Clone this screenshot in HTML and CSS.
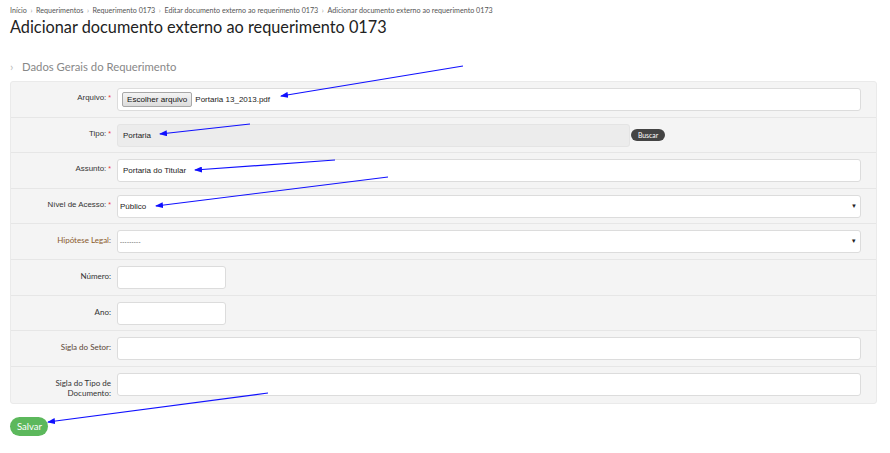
FILE: index.html
```html
<!DOCTYPE html>
<html lang="pt">
<head>
<meta charset="utf-8">
<title>Adicionar documento externo</title>
<link rel="stylesheet" href="styles.css">
</head>
<body>
<div class="page">
  <nav class="breadcrumb">
    <span>Início</span><span class="sep">›</span><span>Requerimentos</span><span class="sep">›</span><span>Requerimento 0173</span><span class="sep">›</span><span>Editar documento externo ao requerimento 0173</span><span class="sep">›</span><span>Adicionar documento externo ao requerimento 0173</span>
  </nav>
  <h1 class="title">Adicionar documento externo ao requerimento 0173</h1>

  <div class="section-head"><span class="chev">›</span>Dados Gerais do Requerimento</div>

  <div class="panel">
    <div class="row">
      <div class="label arial">Arquivo:<span class="req">*</span></div>
      <div class="field"><div class="input file"><span class="filebtn">Escolher arquivo</span><span class="fname">Portaria 13_2013.pdf</span></div></div>
    </div>
    <div class="row">
      <div class="label arial">Tipo:<span class="req">*</span></div>
      <div class="field inline"><div class="input disabled tipo">Portaria</div><span class="buscar">Buscar</span></div>
    </div>
    <div class="row">
      <div class="label arial">Assunto:<span class="req">*</span></div>
      <div class="field"><div class="input">Portaria do Titular</div></div>
    </div>
    <div class="row">
      <div class="label arial">Nível de Acesso:<span class="req">*</span></div>
      <div class="field"><div class="input select tight">Público<span class="caret">▼</span></div></div>
    </div>
    <div class="row">
      <div class="label brown">Hipótese Legal:</div>
      <div class="field"><div class="input select tight dashes">---------<span class="caret">▼</span></div></div>
    </div>
    <div class="row">
      <div class="label">Número:</div>
      <div class="field"><div class="input small"></div></div>
    </div>
    <div class="row">
      <div class="label">Ano:</div>
      <div class="field"><div class="input small"></div></div>
    </div>
    <div class="row">
      <div class="label darkbrown">Sigla do Setor:</div>
      <div class="field"><div class="input"></div></div>
    </div>
    <div class="row last">
      <div class="label">Sigla do Tipo de Documento:</div>
      <div class="field"><div class="input"></div></div>
    </div>
  </div>

  <div class="actions"><span class="salvar">Salvar</span></div>
</div>

<svg class="annot" width="890" height="453" viewBox="0 0 890 453">
  <defs>
    <marker id="ah" markerWidth="8" markerHeight="6" refX="7" refY="3" orient="auto" markerUnits="userSpaceOnUse">
      <path d="M0,0 L8,3 L0,6 z" fill="#1010ff"/>
    </marker>
  </defs>
  <g stroke="#1010ff" stroke-width="1.2" fill="none">
    <line x1="463" y1="66" x2="281" y2="96" marker-end="url(#ah)"/>
    <line x1="250" y1="124" x2="160" y2="134" marker-end="url(#ah)"/>
    <line x1="335" y1="160" x2="195" y2="170" marker-end="url(#ah)"/>
    <line x1="388" y1="177" x2="156" y2="206" marker-end="url(#ah)"/>
    <line x1="268" y1="393" x2="48" y2="422" marker-end="url(#ah)"/>
  </g>
</svg>
</body>
</html>
```

FILE: styles.css
```css
html, body {
  margin: 0;
  padding: 0;
  background: #fff;
}
body {
  font-family: Lato, "Liberation Sans", sans-serif;
  color: #333;
  width: 890px;
  height: 453px;
  overflow: hidden;
  position: relative;
}
.page {
  padding: 5px 13px 0 10px;
}
.breadcrumb {
  font-size: 7.15px;
  color: #555;
  line-height: 11px;
  height: 11px;
}
.breadcrumb .sep {
  color: #999;
  margin: 0 3.6px;
}
.title {
  margin: 0;
  font-weight: 400;
  font-size: 16.3px;
  line-height: 21px;
  color: #222;
}
.section-head {
  margin-top: 22px;
  font-size: 11.3px;
  line-height: 16px;
  color: #888;
  display: flex;
  align-items: center;
}
.section-head .chev {
  color: #bbb;
  font-size: 12px;
  width: 12px;
}
.panel {
  margin-top: 6px;
  background: #f4f4f4;
  border: 1px solid #eaeaea;
  border-radius: 3px;
}
.row {
  display: grid;
  grid-template-columns: 100px 1fr;
  column-gap: 6px;
  padding: 6px 15px 5.6px 0;
  border-bottom: 1px solid #e6e6e6;
}
.row.last {
  border-bottom: none;
}
.label {
  text-align: right;
  font-size: 8px;
  line-height: 10px;
  padding-top: 5px;
  padding-left: 30px;
  color: #333;
}
.label.arial {
  font-family: "Liberation Sans", Arial, sans-serif;
  font-size: 7.9px;
  padding-left: 0;
}
.label.brown {
  color: #8a5a2b;
}
.label.darkbrown {
  color: #5a4634;
}
.req {
  color: #e33;
  margin-left: 2px;
  vertical-align: top;
  font-size: 7px;
}
.field {
  display: flex;
  align-items: flex-start;
}
.field.inline {
  align-items: center;
  gap: 1px;
}
.input {
  flex: 1;
  height: 23px;
  box-sizing: border-box;
  background: #fff;
  border: 1px solid #dcdcdc;
  border-radius: 3px;
  font-family: "Liberation Sans", Arial, sans-serif;
  font-size: 8px;
  color: #222;
  display: flex;
  align-items: center;
  padding: 0 5px;
  position: relative;
}
.input.tight {
  padding-left: 2px;
}
.input.disabled {
  background: #ececec;
  border-color: #e4e4e4;
}
.input.tipo {
  flex: 0 0 513px;
}
.input.small {
  flex: 0 0 109px;
}
.input.file {
  padding-left: 4px;
}
.filebtn {
  border: 1px solid #a8a8a8;
  background: linear-gradient(#f4f4f4, #dcdcdc);
  border-radius: 2px;
  padding: 1px 4px;
  font-size: 8.1px;
  color: #111;
  line-height: 11px;
}
.fname {
  margin-left: 3px;
}
.input.select .caret {
  position: absolute;
  right: 3px;
  top: 7px;
  font-size: 6px;
  color: #222;
}
.input.dashes {
  font-size: 6px;
  letter-spacing: 0.3px;
}
.buscar {
  background: #444;
  color: #fff;
  font-size: 6.8px;
  line-height: 12px;
  height: 12px;
  padding: 0 7px;
  border-radius: 6px;
}
.actions {
  margin-top: 10px;
}
.salvar {
  display: inline-block;
  background: #5cb85c;
  color: #fff;
  font-size: 9.5px;
  line-height: 19px;
  height: 19px;
  padding: 0 6px 0 7px;
  border-radius: 10px;
}
.annot {
  position: absolute;
  left: 0;
  top: 0;
  pointer-events: none;
}
```
